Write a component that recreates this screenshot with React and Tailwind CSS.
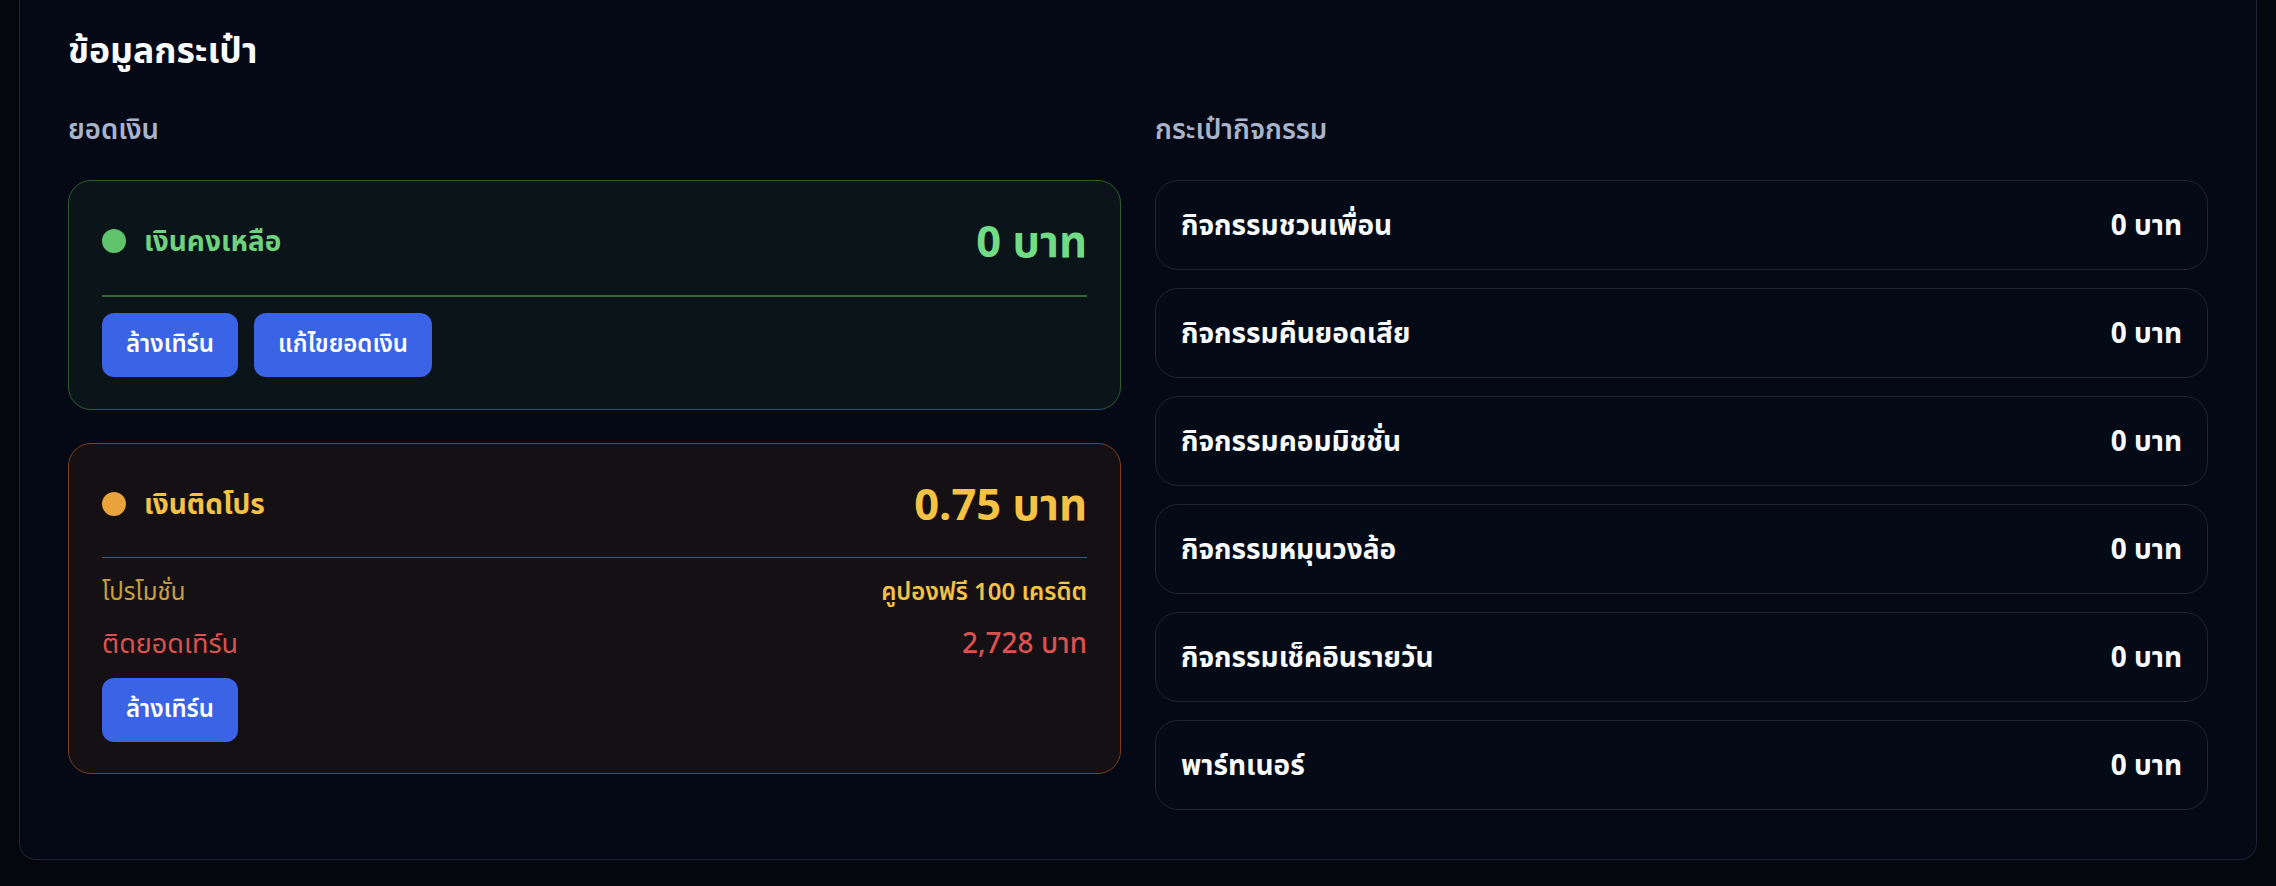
import React from "react";

const activities = [
  "กิจกรรมชวนเพื่อน",
  "กิจกรรมคืนยอดเสีย",
  "กิจกรรมคอมมิชชั่น",
  "กิจกรรมหมุนวงล้อ",
  "กิจกรรมเช็คอินรายวัน",
  "พาร์ทเนอร์",
];

function Btn({ children }) {
  return (
    <button className="h-[64px] px-[24px] rounded-[12px] bg-[#3a63e5] text-white text-[24px] font-semibold leading-none">
      {children}
    </button>
  );
}

export default function App() {
  return (
    <div className="min-h-[886px] w-full bg-[#05070e] font-['Noto_Sans_Thai','Noto_Sans',sans-serif]">
      <div className="mx-[19px] border border-t-0 border-[#1e2433] rounded-b-[17px] bg-[#040915] px-[48px] pt-[29px] pb-[49px]">
        <h1 className="text-[35.5px] leading-[46px] font-bold text-[#f8fafc]">ข้อมูลกระเป๋า</h1>
        <div className="mt-[36px] grid grid-cols-2 gap-x-[34px]">
          <div className="flex flex-col">
            <h2 className="text-[27.5px] leading-[40px] font-semibold text-[#a9b3ca]">ยอดเงิน</h2>
            <div className="mt-[29px] rounded-[23px] border border-[#2d5f33] bg-[#0b1519] px-[33px] pt-[34px] pb-[32px]">
              <div className="flex items-center justify-between h-[52px]">
                <div className="flex items-center gap-[18px]">
                  <span className="w-[24px] h-[24px] rounded-full bg-[#5fc36b]" />
                  <span className="pt-[4px] text-[28px] font-bold text-[#6fd27e]">เงินคงเหลือ</span>
                </div>
                <span className="pt-[6px] text-[43.5px] leading-[52px] font-bold text-[#72db86]">0 บาท</span>
              </div>
              <div className="mt-[28px] h-[1.5px] bg-[#2f6a36]" />
              <div className="mt-[16px] flex gap-[16px]">
                <Btn>ล้างเทิร์น</Btn>
                <Btn>แก้ไขยอดเงิน</Btn>
              </div>
            </div>
            <div className="mt-[33px] rounded-[23px] border border-[#7d4119] bg-[#151014] px-[33px] pt-[34px] pb-[31px]">
              <div className="flex items-center justify-between h-[52px]">
                <div className="flex items-center gap-[18px]">
                  <span className="w-[24px] h-[24px] rounded-full bg-[#e9a33d]" />
                  <span className="pt-[4px] text-[28px] font-bold text-[#f4c244]">เงินติดโปร</span>
                </div>
                <span className="pt-[6px] text-[43.5px] leading-[52px] font-bold text-[#f4c244]">0.75 บาท</span>
              </div>
              <div className="mt-[27px] h-[1.5px] bg-[#874516]" />
              <div className="mt-[17px] flex items-center justify-between h-[35px]">
                <span className="text-[24px] text-[#c7a040]">โปรโมชั่น</span>
                <span className="text-[24px] font-semibold text-[#f4c244]">คูปองฟรี 100 เครดิต</span>
              </div>
              <div className="mt-[15px] flex items-center justify-between h-[40px]">
                <span className="text-[27px] text-[#de5050]">ติดยอดเทิร์น</span>
                <span className="text-[28px] font-medium text-[#de5050]">2,728 บาท</span>
              </div>
              <div className="mt-[13px] flex">
                <Btn>ล้างเทิร์น</Btn>
              </div>
            </div>
          </div>
          <div className="flex flex-col">
            <h2 className="text-[27.5px] leading-[40px] font-semibold text-[#a9b3ca]">กระเป๋ากิจกรรม</h2>
            <div className="mt-[29px] flex flex-col gap-[18px]">
              {activities.map((a) => (
                <div
                  key={a}
                  className="h-[90px] flex items-center justify-between rounded-[23px] border border-[#1f2534] bg-[#050a17] px-[25px]"
                >
                  <span className="pt-[3px] text-[28px] font-bold text-[#f8fafc]">{a}</span>
                  <span className="pt-[3px] text-[28px] font-bold text-[#f8fafc]">0 บาท</span>
                </div>
              ))}
            </div>
          </div>
        </div>
      </div>
    </div>
  );
}
